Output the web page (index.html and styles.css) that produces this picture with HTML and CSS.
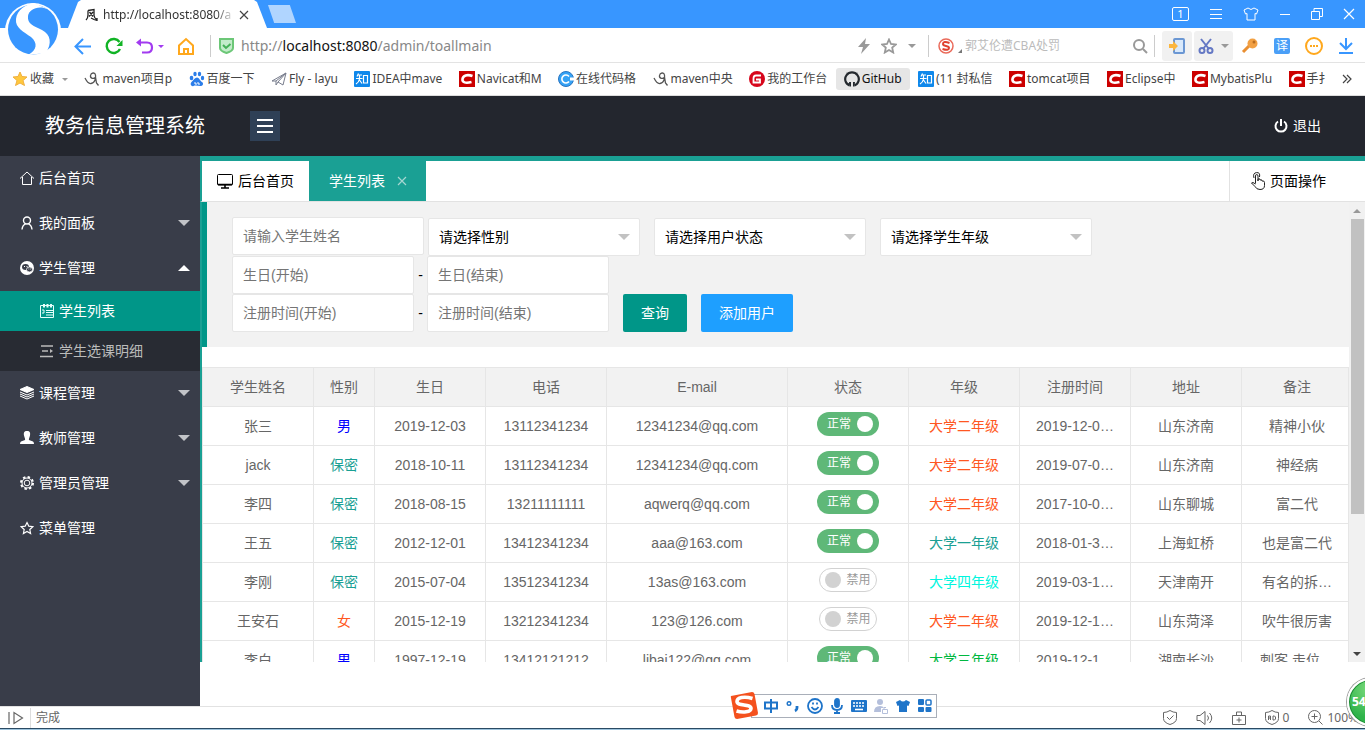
FILE: index.html
```html
<!DOCTYPE html>
<html lang="zh-CN">
<head>
<meta charset="utf-8">
<title>教务信息管理系统</title>
<link rel="stylesheet" href="styles.css">
</head>
<body>
<svg class="defs" aria-hidden="true">
  <symbol id="maven" viewBox="0 0 16 16"><path d="M1 7q3 6 6 5.500C11 12 12 7 11.500 4S7 1.500 6.500 4.500s3.500 4 5 1.500l1 6 2 2.500" fill="none" stroke="#555" stroke-width="1.300"/></symbol>
  <symbol id="zhi" viewBox="0 0 16 16"><rect width="16" height="16" rx="1" fill="#0f88eb"/><path d="M4.500 2.500 3 5.500M4 4h4M2 7.500h6.500M5.500 4v4q-.5 3-3.500 5M5.500 9l2.500 3.500M9.500 4.500h4v7.500h-4z" fill="none" stroke="#fff" stroke-width="1.200"/></symbol>
  <symbol id="csdn" viewBox="0 0 16 16"><path fill="#c00" d="M0 0h16v16H0z"/><path d="M13.500 5C8 3 4 4.500 3.500 8s3 4.500 9 3" fill="none" stroke="#fff" stroke-width="2.600"/></symbol>
  <symbol id="shirt" viewBox="0 0 16 14"><path d="M5 1 1 3l1.500 4L4 6.500V13h8V6.500l1.500.5L15 3l-4-2q-3 3-6 0z"/></symbol>
</svg>

<div class="browser">
  <svg class="sogou" viewBox="0 0 64 60" aria-hidden="true"><circle cx="33" cy="31" r="28" fill="#fff"/><circle cx="33" cy="29.500" r="25" fill="#3896ff"/><path d="M48 9C38 5 29 9 28 16c-1 8 6 10 14 14 9 5 10 13 4 23l-18 2c9-5 10-12 3-18C24 32 15 28 16 19 17 10 26 4 34 3z" fill="#fff"/></svg>
  <div class="titlebar">
    <div class="browser-tab">
      <svg width="14" height="14" viewBox="0 0 14 14" fill="none" stroke="#222" stroke-width="1.300"><path d="M3 2.500 9 1.500v6q.5 3 3 4.500M3 2.500V7q0 3-2 5M4.500 4l3.500 4.500M8 4 4 8.500M6 10l3 1.500 3 1M12 10v3"/></svg>
      <span class="tab-title">http://localhost:8080/a</span>
      <button class="plain" aria-label="关闭标签"><svg width="10" height="10" viewBox="0 0 10 10" stroke="#444" stroke-width="1.200"><path d="m1 1 8 8M9 1 1 9"/></svg></button>
    </div>
    <button class="new-tab" aria-label="新标签"></button>
    <div class="window-tools">
      <button class="plain count">1</button>
      <button class="plain" aria-label="菜单"><svg width="14" height="12" viewBox="0 0 14 12" stroke="#fff"><path d="M1 1.500h12M1 6.500h12M1 10.500h12"/></svg></button>
      <button class="plain" aria-label="皮肤"><svg width="16" height="14" fill="none" stroke="#fff"><use href="#shirt"/></svg></button>
      <button class="plain" aria-label="最小化"><svg width="12" height="12" stroke="#fff"><path d="M1 6.500h10"/></svg></button>
      <button class="plain" aria-label="还原"><svg width="12" height="12" fill="none" stroke="#fff"><path d="M.5 3.500h8v8h-8zM3 3V.5h8.500v8H9"/></svg></button>
      <button class="plain" aria-label="关闭"><svg width="12" height="12" stroke="#fff" stroke-width="1.200"><path d="m1 1 10 10M11 1 1 11"/></svg></button>
    </div>
  </div>

  <div class="address">
    <div class="nav-tools">
      <button class="plain" aria-label="后退"><svg width="18" height="18" fill="none" stroke="#3896ff" stroke-width="2"><path d="M17 9.500H2M9 2 1.500 9.500 9 17"/></svg></button>
      <button class="plain" aria-label="刷新"><svg width="18" height="18" fill="none" stroke="#11b325" stroke-width="2.400"><path d="M14.500 5a7 7 0 1 0 .5 7"/><path d="M17.500 3v6h-6z" fill="#11b325" stroke="none"/></svg></button>
      <button class="plain undo" aria-label="恢复"><svg width="28" height="18" fill="none" stroke="#a23bf0" stroke-width="2.200"><path d="M3 5.500h8q5 0 5 5t-5 5H6"/><path d="M0 5.500l5-4v8zM22 8h6l-3 3z" fill="#a23bf0" stroke="none"/></svg></button>
      <button class="plain" aria-label="主页"><svg width="18" height="18" fill="none" stroke="#ffa81d" stroke-width="2"><path d="M2 8.500 9 2l7 6.500V17H2z"/><path d="M7 16v-4h4v4"/></svg></button>
    </div>
    <span class="bar"></span>
    <svg class="safe" width="15" height="16" viewBox="0 0 15 16"><path d="M1 1h13v9q0 3-6.500 5Q1 13 1 10z" fill="#c3ecca" stroke="#6cc777" stroke-width="2"/><path d="m4 7 3 3 4.500-4" fill="none" stroke="#45b157" stroke-width="2"/></svg>
    <span class="url">http://<b>localhost:8080</b>/admin/toallmain</span>
    <div class="url-tools">
      <svg width="12" height="16" viewBox="0 0 12 16"><path d="M8 0 0 9h5l-2 7 9-10H7z" fill="#999"/></svg>
      <svg width="16" height="16" viewBox="0 0 16 16" fill="none" stroke="#999" stroke-width="1.800"><path d="m8 1.500 2 4.500 4.800.5-3.600 3.200 1 4.800L8 12l-4.200 2.500 1-4.800L1.200 6.500 6 6z"/></svg>
      <i class="caret"></i>
    </div>
    <span class="bar"></span>
    <label class="search">
      <svg width="24" height="18" viewBox="0 0 24 18"><circle cx="8" cy="9" r="7" fill="none" stroke="#ea6a5a" stroke-width="1.500"/><path d="M11.500 6Q5 3.500 5 7q0 1.500 3 2t3 2q0 3-6.500 1" fill="none" stroke="#e0412f" stroke-width="2"/><path d="M24 12v4h-4z" fill="#777"/></svg>
      <input type="text" aria-label="搜索" placeholder="郭艾伦遭CBA处罚">
      <svg width="16" height="16" fill="none" stroke="#999" stroke-width="2"><circle cx="7" cy="7" r="5"/><path d="m11 11 4 4"/></svg>
    </label>
    <span class="bar"></span>
    <div class="extensions">
      <button class="plain ext" aria-label="发送到手机"><svg width="18" height="18"><rect x="6" y="2" width="10" height="14" rx="1" fill="#d9e9fb" stroke="#6b97d3" stroke-width="2"/><path d="M1 7h4V4l5 5-5 5v-3H1z" fill="#fbb63f"/></svg></button>
      <button class="plain ext wide" aria-label="截图"><svg width="16" height="18" fill="none" stroke="#6478c4" stroke-width="2"><path d="m3 2 8 10M13 2 5 12"/><circle cx="4" cy="13.500" r="2.500"/><circle cx="12" cy="13.500" r="2.500"/></svg><i class="caret"></i></button>
      <button class="plain tool" aria-label="密码"><svg width="18" height="18"><path d="m2 15 7-7" stroke="#e98f32" stroke-width="3"/><circle cx="11.500" cy="6.500" r="5" fill="#f2a043"/><circle cx="13" cy="5" r="1.500" fill="#b96c20"/></svg></button>
      <button class="plain tool"><span class="translate">译</span></button>
      <button class="plain tool" aria-label="更多工具"><svg width="18" height="18"><circle cx="9" cy="9" r="8" fill="none" stroke="#ffa81d" stroke-width="2"/><path d="M5 9h2m1 0h2m1 0h2" stroke="#ffa81d" stroke-width="2"/></svg></button>
      <button class="plain tool" aria-label="下载"><svg width="16" height="18" fill="none" stroke="#3896ff" stroke-width="2"><path d="M8 1v11M2 6l6 6 6-6M1 16h14"/></svg></button>
    </div>
  </div>

  <nav class="bookmarks" aria-label="收藏夹">
    <a href="#"><svg width="16" height="16"><path d="m8 1 2 4.500 5 .5-4 3.500 1.500 5L8 12l-4.500 2.500 1.500-5L1 6l5-.5z" fill="#ffc83d" stroke="#f0b040"/></svg>收藏<i class="caret"></i></a>
    <a href="#"><svg width="16" height="16"><use href="#maven"/></svg>maven项目p</a>
    <a href="#"><svg width="16" height="16" fill="#2b7de9"><ellipse cx="2.500" cy="7" rx="1.800" ry="2.200"/><ellipse cx="6" cy="3" rx="1.700" ry="2.300"/><ellipse cx="10.500" cy="3" rx="1.700" ry="2.300"/><ellipse cx="13.500" cy="7" rx="1.700" ry="2.200"/><path d="M8 6.500c2 0 3 3 5 4.500s1 4-1.500 4-5-1-7 0-4-2-2-4S6 6.500 8 6.500z"/><path d="M5 12h2v2M9 11v2h2" fill="none" stroke="#fff"/></svg>百度一下</a>
    <a href="#"><svg width="16" height="16" fill="none" stroke="#777c8c"><path d="M1 10 15 2l-3 12-5-3-2 3v-4zM5 10l10-8-8 9"/></svg>Fly - layu</a>
    <a href="#"><svg width="16" height="16"><use href="#zhi"/></svg>IDEA中mave</a>
    <a href="#"><svg width="16" height="16"><use href="#csdn"/></svg>Navicat和M</a>
    <a href="#"><svg width="16" height="16"><circle cx="8" cy="8" r="7.500" fill="#35a2f5" stroke="#2874c0"/><path d="M11 5.500a4 4 0 1 0 0 5" fill="none" stroke="#fff" stroke-width="1.600"/><path d="M12 6.500h4v3h-4z" fill="#fff"/></svg>在线代码格</a>
    <a href="#"><svg width="16" height="16"><use href="#maven"/></svg>maven中央</a>
    <a href="#"><svg width="16" height="16"><circle cx="8" cy="8" r="8" fill="#d7061b"/><path d="M12 4.500H7q-2.500 0-2.500 3v4H11V8.500H7" fill="none" stroke="#fff" stroke-width="1.800"/></svg>我的工作台</a>
    <a href="#" class="current"><svg width="16" height="16"><path d="M5.500 14.500A6.800 6.800 0 1 1 10.500 14.500" fill="none" stroke="#24292e" stroke-width="2.200"/><path d="M2.500 1.500 6 3H3zM13.500 1.500 10 3h3zM5 11h2v4.500H5.500zM9 11h2l-.5 4.500H9zM2.500 10.500q1 2.500 4 2v1.200q-3.500.5-4-3.200z" fill="#24292e"/></svg>GitHub</a>
    <a href="#"><svg width="16" height="16"><use href="#zhi"/></svg>(11 封私信</a>
    <a href="#"><svg width="16" height="16"><use href="#csdn"/></svg>tomcat项目</a>
    <a href="#"><svg width="16" height="16"><use href="#csdn"/></svg>Eclipse中</a>
    <a href="#"><svg width="16" height="16"><use href="#csdn"/></svg>MybatisPlu</a>
    <a href="#"><svg width="16" height="16"><use href="#csdn"/></svg>手扌</a>
    <button class="plain more" aria-label="更多"><svg width="10" height="10" fill="none" stroke="#444" stroke-width="1.200"><path d="m1 1 4 4-4 4M5 1l4 4-4 4"/></svg></button>
  </nav>
</div>

<header class="app-header">
  <h1>教务信息管理系统</h1>
  <button class="plain menu-toggle" aria-label="收起菜单"><svg width="18" height="16" stroke="#fff" stroke-width="2"><path d="M1 2h16M1 8h16M1 14h16"/></svg></button>
  <a href="#" class="logout"><svg width="14" height="14" fill="none" stroke="#fff" stroke-width="2"><path d="M4 2.500a5.500 5.500 0 1 0 6 0M7 0v7"/></svg>退出</a>
</header>

<div class="app">
  <nav class="sidebar" aria-label="菜单">
    <a href="#" class="item"><svg width="14" height="14" fill="none" stroke="#fff"><path d="M0 7.500 7 1l7 6.500M2.500 6v7.500h9V6"/></svg>后台首页</a>
    <a href="#" class="item"><svg width="14" height="14" fill="none" stroke="#fff" stroke-width="1.400"><circle cx="7" cy="4.500" r="3.500"/><path d="M2 13.500Q2.500 9 5.500 7.800M12 13.500Q11.500 9 8.500 7.800"/></svg>我的面板<i class="arrow"></i></a>
    <a href="#" class="item"><svg width="14" height="14"><circle cx="7" cy="7" r="7" fill="#fff"/><ellipse cx="5.500" cy="6" rx="3.500" ry="3" fill="#393d49"/><ellipse cx="9.500" cy="8.500" rx="3" ry="2.500" fill="#393d49" stroke="#fff" stroke-width=".8"/><path d="M4 5.500h1m1.500 0h1M8.500 8h.8m1 0h.8" stroke="#fff"/></svg>学生管理<i class="arrow up"></i></a>
    <div class="sub">
      <a href="#" class="active"><svg width="14" height="14" fill="none" stroke="#e6fffb"><path d="M.5 1.500h13v12H.5z"/><path d="M4 0v3.500M7.500 0v3.500M11 0v3.500" stroke-width="2"/><path d="M6 6.500h7M6 8.500h7M6 11h7M2 6h2v3H2"/></svg>学生列表</a>
      <a href="#"><svg width="14" height="14" fill="none" stroke="#bbb" stroke-width="1.500"><path d="M1 2h12M2 7h6M0 12.500h13"/><path d="M10 5v4l3-2z" fill="#bbb" stroke="none"/></svg>学生选课明细</a>
    </div>
    <a href="#" class="item"><svg width="14" height="14" fill="none" stroke="#fff"><path d="m7 .5 7 3-7 3-7-3z" fill="#fff"/><path d="m0 6 7 3 7-3M0 8l7 3 7-3M0 10l7 3 7-3"/></svg>课程管理<i class="arrow"></i></a>
    <a href="#" class="item"><svg width="14" height="14" fill="#fff"><path d="M7 0c3 0 3.500 2 3 4.500S8.500 8 9 9l4 1.500q1 .5 1 2.500H0q0-2 1-2.500L5 9c.500-1-.5-2-1-4.500S4 0 7 0z"/></svg>教师管理<i class="arrow"></i></a>
    <a href="#" class="item"><svg width="14" height="14" fill="none" stroke="#fff"><circle cx="7" cy="7" r="5"/><circle cx="7" cy="7" r="2.800"/><circle cx="7" cy="7" r="6" stroke-width="2" stroke-dasharray="2.400 2.300"/></svg>管理员管理<i class="arrow"></i></a>
    <a href="#" class="item"><svg width="14" height="14" fill="none" stroke="#fff" stroke-width="1.200"><path d="m7 1.500 1.800 3.700 4 .5-3 2.800.8 4L7 10.500l-3.600 2 .8-4-3-2.800 4-.5z"/></svg>菜单管理</a>
  </nav>

  <main class="content">
    <div class="tabs">
      <a href="#" class="tab"><svg width="16" height="16" fill="none" stroke="#000"><rect x=".5" y="1.500" width="15" height="10.500" rx="1"/><path d="M1 11.500h14M4 15h8M8 12v3" stroke-width="1.600"/></svg>后台首页</a>
      <div class="tab on"><a href="#">学生列表</a><button class="plain" aria-label="关闭"><svg width="10" height="10" stroke="#a5d6d1" stroke-width="1.200"><path d="m1 1 8 8M9 1 1 9"/></svg></button></div>
      <a href="#" class="page-ops"><svg width="14" height="18" fill="none" stroke="#222"><path d="M4.500 11.500V4q0-1.500 1.200-1.500T7 4v5V7q2-1 2 1 2-1 2 1 2.500-.5 2.500 1.500v3q0 4-4.500 4-3.500 0-5-3L.5 11q1-1.500 4 1M3 6Q1.500 1 5.500.6T8.500 5"/></svg>页面操作</a>
    </div>

    <div class="frame">
      <div class="page">
        <form class="filters">
          <div class="line first">
            <input class="field name" type="text" aria-label="学生姓名" placeholder="请输入学生姓名">
            <span class="pick"><select class="field" aria-label="性别"><option>请选择性别</option></select></span>
            <span class="pick"><select class="field" aria-label="用户状态"><option>请选择用户状态</option></select></span>
            <span class="pick"><select class="field" aria-label="学生年级"><option>请选择学生年级</option></select></span>
          </div>
          <div class="line">
            <input class="field date" type="text" aria-label="生日开始" placeholder="生日(开始)"><span class="dash">-</span><input class="field date" type="text" aria-label="生日结束" placeholder="生日(结束)">
          </div>
          <div class="line">
            <input class="field date" type="text" aria-label="注册时间开始" placeholder="注册时间(开始)"><span class="dash">-</span><input class="field date" type="text" aria-label="注册时间结束" placeholder="注册时间(结束)">
            <button type="button" class="btn">查询</button>
            <button type="button" class="btn blue">添加用户</button>
          </div>
        </form>

        <div class="table-box">
          <table>
            <colgroup><col class="c-m"><col class="c-s"><col class="c-m"><col class="c-l"><col class="c-xl"><col class="c-l"><col class="c-m"><col class="c-m"><col class="c-m"><col class="c-m"></colgroup>
            <thead><tr><th>学生姓名</th><th>性别</th><th>生日</th><th>电话</th><th>E-mail</th><th>状态</th><th>年级</th><th>注册时间</th><th>地址</th><th>备注</th></tr></thead>
            <tbody>
              <tr><td>张三</td><td class="male">男</td><td>2019-12-03</td><td>13112341234</td><td>12341234@qq.com</td><td class="state"><label class="switch">正常<input type="checkbox" checked></label></td><td class="red">大学二年级</td><td>2019-12-0…</td><td>山东济南</td><td>精神小伙</td></tr>
              <tr><td>jack</td><td class="teal">保密</td><td>2018-10-11</td><td>13112341234</td><td>12341234@qq.com</td><td class="state"><label class="switch">正常<input type="checkbox" checked></label></td><td class="red">大学二年级</td><td>2019-07-0…</td><td>山东济南</td><td>神经病</td></tr>
              <tr><td>李四</td><td class="teal">保密</td><td>2018-08-15</td><td>13211111111</td><td>aqwerq@qq.com</td><td class="state"><label class="switch">正常<input type="checkbox" checked></label></td><td class="red">大学二年级</td><td>2017-10-0…</td><td>山东聊城</td><td>富二代</td></tr>
              <tr><td>王五</td><td class="teal">保密</td><td>2012-12-01</td><td>13412341234</td><td>aaa@163.com</td><td class="state"><label class="switch">正常<input type="checkbox" checked></label></td><td class="teal">大学一年级</td><td>2018-01-3…</td><td>上海虹桥</td><td>也是富二代</td></tr>
              <tr><td>李刚</td><td class="teal">保密</td><td>2015-07-04</td><td>13512341234</td><td>13as@163.com</td><td class="state"><label class="switch off"><input type="checkbox">禁用</label></td><td class="cyan">大学四年级</td><td>2019-03-1…</td><td>天津南开</td><td>有名的拆…</td></tr>
              <tr><td>王安石</td><td class="red">女</td><td>2015-12-19</td><td>13212341234</td><td>123@126.com</td><td class="state"><label class="switch off"><input type="checkbox">禁用</label></td><td class="red">大学二年级</td><td>2019-12-1…</td><td>山东菏泽</td><td>吹牛很厉害</td></tr>
              <tr><td>李白</td><td class="male">男</td><td>1997-12-19</td><td>13412121212</td><td>libai122@qq.com</td><td class="state"><label class="switch">正常<input type="checkbox" checked></label></td><td class="green">大学三年级</td><td>2019-12-1…</td><td>湖南长沙</td><td>刺客 走位…</td></tr>
            </tbody>
          </table>
        </div>
      </div>
      <div class="scrollbar" aria-hidden="true"><i class="tri up"></i><span class="thumb"></span><i class="tri down"></i></div>
    </div>
  </main>
</div>

<footer class="statusbar">
  <svg width="16" height="14" fill="none" stroke="#666" stroke-width="1.200"><path d="M1 1v12M6 1.500v11l8.500-5.500z"/></svg>
  <span class="done">完成</span>
  <div class="status-tools">
    <svg width="14" height="15" fill="none" stroke="#666"><path d="M7 .5q3 2 6.500 2v6q0 4-6.500 6-6.500-2-6.500-6v-6q3.500 0 6.500-2zM4 7l2.500 2.500 4-4"/></svg>
    <svg width="17" height="14" fill="none" stroke="#666"><path d="M1 4.500h3l5-4v13l-5-4H1zM11.500 4.500q2 2.500 0 5M13.500 2q4.500 5 0 10"/></svg>
    <svg width="14" height="14" fill="none" stroke="#666"><path d="M.5 4.500h13v9H.5zM4.500 4V1h5v3M7 6.500v5M4.500 9h5"/></svg>
    <span class="ad"><svg width="14" height="15" fill="none" stroke="#666"><path d="M7 .5q3 2 6.500 2v6q0 4-6.500 6-6.500-2-6.500-6v-6q3.500 0 6.500-2zM3.500 10V6h2v4M3.500 8h2M8 6v4h1.500l1-1V7l-1-1z"/></svg>0</span>
    <span class="ad"><svg width="15" height="15" fill="none" stroke="#666"><circle cx="6.500" cy="6.500" r="6"/><path d="m11 11 3.500 3.500M3.500 6.500h6M6.500 3.500v6"/></svg>100%</span>
  </div>
</footer>
<div class="taskbar"></div>

<div class="ime" aria-hidden="true">
  <svg class="ime-logo" width="28" height="28"><path d="m1 5 21-4q2 0 2.500 2L28 22q0 2-2 2.500L7 28q-2 0-2.500-2L1 7q-.5-1.500 0-2z" fill="#f4511e"/><path d="M22.500 7.500C14 5 7 6.500 7 10.500c0 5 14 2 14 7 0 3.500-8 4.500-14.500 2.500" fill="none" stroke="#fff" stroke-width="3.600"/></svg>
  <svg width="16" height="16" fill="none" stroke="#1e74c9" stroke-width="2"><path d="M2 4.500h12v6H2zM8 1v14"/></svg>
  <svg width="16" height="16" fill="none" stroke="#1e74c9"><circle cx="4" cy="5.500" r="1.800" stroke-width="1.400"/><path d="M12 8v2q0 2-2 3" stroke-width="2.800"/></svg>
  <svg width="16" height="16" fill="none" stroke="#1e74c9" stroke-width="1.800"><circle cx="8" cy="8" r="7"/><path d="M4.500 9q3.500 5 7 0M6 4.500v2M10 4.500v2"/></svg>
  <svg width="16" height="16" fill="none" stroke="#1e74c9" stroke-width="1.800"><rect x="6" y="1" width="4" height="8" rx="2" fill="#1e74c9"/><path d="M3 7q0 5 5 5t5-5M8 12v3M5 15h6"/></svg>
  <svg width="16" height="16"><rect y="2" width="16" height="12" rx="1" fill="#1e74c9"/><path d="M2 5h12M2 8h12" stroke="#fff" stroke-width="1.600" stroke-dasharray="2 1"/><path d="M4 11.500h8" stroke="#fff" stroke-width="1.600"/></svg>
  <svg width="16" height="16" fill="#b4bfdb"><circle cx="7" cy="4" r="3"/><path d="M1 14q0-6 6-6 3 0 4 2H8v4z"/><path d="M9.500 11.500h5v4h-5zM11 11V9.500h2" fill="#fff" stroke="#b4bfdb"/></svg>
  <svg width="16" height="14" fill="#1e74c9"><use href="#shirt"/></svg>
  <svg width="16" height="16" fill="#1e74c9"><rect x="1" y="1" width="6" height="6" rx="1"/><rect x="9" y="2" width="5" height="5" rx="1" fill="none" stroke="#1e74c9" stroke-width="1.500"/><rect x="1" y="9" width="6" height="5" rx="1"/><rect x="8.500" y="9" width="6" height="5" rx="1"/></svg>
</div>
<div class="ball">54</div>
</body>
</html>
```

FILE: styles.css
```css
* { box-sizing: border-box; }
body {
  margin: 0;
  height: 100vh;
  display: flex;
  flex-direction: column;
  position: relative;
  overflow: hidden;
  background: #fff;
  font: 14px/20px "Liberation Sans", "Noto Sans CJK SC", sans-serif;
  color: #000;
}
a { color: inherit; text-decoration: none; }
svg { display: block; flex: none; }
.defs { position: absolute; width: 0; height: 0; }
.plain { border: 0; padding: 0; background: none; font: inherit; color: inherit; display: flex; align-items: center; justify-content: center; }

/* Browser window */
.browser { position: relative; flex: none; font-family: "Noto Sans", "Noto Sans CJK SC", sans-serif; font-size: 12px; }
.sogou { position: absolute; left: 0; top: 0; width: 64px; height: 60px; z-index: 1; }
.titlebar { height: 28px; background: #3896ff; display: flex; align-items: center; padding: 0 10px 0 68px; }
.browser-tab { width: 199px; height: 28px; padding: 2px 18px 0 17px; background: #fff; display: flex; align-items: center; gap: 4px; clip-path: polygon(0 100%, 10px 2px, 13px 0, 186px 0, 189px 2px, 100% 100%); }
.tab-title { flex: 1; overflow: hidden; white-space: nowrap; color: #333; -webkit-mask-image: linear-gradient(90deg, #000 85%, transparent); mask-image: linear-gradient(90deg, #000 85%, transparent); }
.new-tab { width: 28px; height: 18px; margin-left: 1px; border: 0; padding: 0; background: #b0d5ff; clip-path: polygon(0 0, 78% 0, 100% 100%, 22% 100%); }
.window-tools { margin-left: auto; display: flex; align-items: center; gap: 20px; color: #fff; }
.count { width: 17px; height: 14px; border: 1px solid #fff; border-radius: 2px; font-size: 11px; line-height: 12px; }

.address { height: 35px; border-bottom: 1px solid #e3e3e3; display: flex; align-items: center; padding: 1px 4px 0 74px; }
.nav-tools { display: flex; gap: 13px; margin-right: 15px; }
.bar { width: 1px; height: 22px; background: #ccc; }
.safe { margin: 0 7px 0 8px; }
.url { flex: 1; font-size: 14px; color: #888; }
.url b { font-weight: 400; color: #111; }
.url-tools { display: flex; align-items: center; gap: 11px; margin-right: 12px; }
.caret { border: 4px solid transparent; border-top-color: #999; border-bottom: 0; }
.search { display: flex; align-items: center; width: 225px; padding: 0 6px 0 9px; gap: 3px; }
.search input { flex: 1; min-width: 0; border: 0; padding: 0; outline: 0; font: inherit; }
.search input::placeholder { color: #bbb; }
.extensions { display: flex; align-items: center; gap: 2px; margin-left: 7px; }
.ext { width: 30px; height: 30px; background: #f1f1f1; border-radius: 3px; }
.ext.wide { width: 39px; gap: 7px; }
.tool { width: 30px; }
.translate { width: 16px; height: 16px; border-radius: 2px; background: #4a9ff7; color: #fff; line-height: 16px; }

.bookmarks { height: 33px; border-bottom: 1px solid #ddd; padding: 0 10px 0 4px; display: flex; align-items: center; justify-content: space-between; color: #444; white-space: nowrap; }
.bookmarks a { display: flex; align-items: center; gap: 2px; height: 22px; padding: 0 8px; border-radius: 3px; }
.bookmarks .caret { margin-left: 6px; border-width: 3px; border-bottom: 0; }
.bookmarks .current { background: #e6e6e6; color: #111; }
.more { width: 16px; }

/* Application */
.app-header { flex: none; height: 60px; background: #23262e; color: #fff; display: flex; align-items: center; padding: 0 44px 0 45px; }
h1 { margin: 0; width: 205px; font-size: 20px; font-weight: 400; line-height: 28px; }
.menu-toggle { width: 30px; height: 30px; background: #2f4056; }
.logout { margin-left: auto; display: flex; align-items: center; gap: 5px; }

.app { flex: 1; min-height: 0; display: flex; }
.sidebar { flex: none; width: 200px; background: #393d49; color: #fff; }
.item { height: 45px; padding: 0 10px 2px 20px; display: flex; align-items: center; gap: 5px; }
.arrow { margin-left: auto; border: 6px solid transparent; border-top-color: #c2c4c8; border-bottom: 0; }
.arrow.up { border-top: 0; border-bottom: 6px solid #fff; }
.sub { background: #282b33; color: #bbb; }
.sub a { height: 40px; padding-left: 40px; display: flex; align-items: center; gap: 5px; }
.sub .active { background: #009688; color: #fff; }

.content { flex: 1; min-width: 0; display: flex; flex-direction: column; padding-bottom: 44px; }
.tabs { flex: none; height: 46px; border-top: 5px solid #1aa094; border-bottom: 1px solid #e2e2e2; border-left: 2px solid #1aa094; display: flex; }
.tab { display: flex; align-items: center; gap: 5px; padding: 0 15px; }
.tab.on { background: #1aa094; color: #fff; padding: 0 19px 0 20px; gap: 12px; }
.page-ops { margin-left: auto; display: flex; align-items: center; gap: 5px; padding: 0 39px 0 21px; border-left: 1px solid #e2e2e2; }

.frame { flex: 1; min-height: 0; display: flex; border-left: 2px solid #1aa094; }
.page { flex: 1; min-width: 0; overflow: hidden; }
.filters { border-left: 5px solid #009688; background: #f2f2f2; padding: 15px 0 15px 25px; margin-bottom: 20px; }
.line { display: flex; }
.first { height: 39px; align-items: flex-end; }
.field { display: block; height: 38px; padding: 0 10px; border: 1px solid #e6e6e6; border-radius: 2px; background: #fff; color: #000; font: inherit; }
.field::placeholder { color: #757575; }
.name { width: 192px; margin-right: 4px; align-self: flex-start; }
.date { width: 182px; }
.dash { width: 13px; text-align: center; line-height: 38px; }
.pick { position: relative; margin-right: 14px; }
.pick select { width: 212px; appearance: none; }
.pick::after { content: ""; position: absolute; right: 10px; top: 16px; border: 6px solid transparent; border-top-color: #c2c2c2; border-bottom: 0; pointer-events: none; }
.btn { height: 38px; margin-left: 14px; padding: 0 18px; border: 0; border-radius: 2px; background: #009688; color: #fff; font: inherit; }
.btn.blue { background: #1e9fff; }

.table-box { overflow: hidden; border: 1px solid #e6e6e6; border-bottom: 0; }
table { width: 1148px; table-layout: fixed; border-collapse: separate; border-spacing: 0; color: #666; }
.c-s { width: 61px; }
.c-m { width: 111px; }
.c-l { width: 121px; }
.c-xl { width: 181px; }
th, td { height: 39px; padding: 0; border: solid #e6e6e6; border-width: 0 1px 1px 0; text-align: center; font-weight: 400; white-space: nowrap; }
th { background: #f2f2f2; }
.male { color: #00f; }
.teal { color: #1aa094; }
.red { color: #ff5722; }
.cyan { color: #01f5de; }
.green { color: #00b83f; }
.state { vertical-align: top; padding-top: 5px; }
.switch { display: inline-flex; align-items: center; gap: 6px; height: 24px; padding: 0 6px 0 10px; border-radius: 12px; background: #5fb878; color: #fff; font-size: 12px; line-height: 22px; vertical-align: top; }
.switch input { appearance: none; width: 16px; height: 16px; margin: 0; border-radius: 50%; background: #fff; }
.switch.off { gap: 5px; padding: 0 5px; border: 1px solid #d2d2d2; background: #fff; color: #999; }
.switch.off input { background: #d2d2d2; }

.scrollbar { width: 16px; background: #f1f1f1; display: flex; flex-direction: column; align-items: center; padding: 7px 0 6px; }
.tri { border: 4px solid transparent; }
.tri.up { border-top: 0; border-bottom-color: #999; }
.tri.down { border-bottom: 0; border-top-color: #444; margin-top: auto; }
.thumb { width: 13px; height: 66%; margin-top: 6px; background: #c1c1c1; }

/* Bottom of the window */
.statusbar { flex: none; height: 22px; border-top: 1px solid #e2e2e2; display: flex; align-items: center; padding-left: 8px; font: 12px/20px "Noto Sans", "Noto Sans CJK SC", sans-serif; color: #666; }
.done { margin-left: 6px; padding-left: 5px; border-left: 1px solid #ddd; }
.status-tools { margin-left: auto; display: flex; align-items: center; gap: 19px; margin-right: 7px; }
.ad { display: flex; align-items: center; gap: 4px; }
.taskbar { flex: none; height: 2px; background: #9cc3dd; border-top: 1px solid #2b4a63; }

.ime { position: absolute; left: 751px; bottom: 12px; height: 24px; padding: 0 3px 0 11px; border: 1px solid #a9afb9; background: #fff; display: flex; align-items: center; gap: 6px; }
.ime-logo { position: absolute; left: -22px; top: -4px; }
.ball { position: absolute; right: -30px; bottom: 4px; width: 48px; height: 48px; border-radius: 50%; border: 2px solid #fff; background: radial-gradient(circle at 50% 20%, #7fdd7f, #2fb34a 70%); box-shadow: 0 0 0 1px #999, inset 0 0 0 1px #1d8c35; color: #fff; font: bold 12px/44px "Noto Sans", sans-serif; padding-left: 3px; }
```
